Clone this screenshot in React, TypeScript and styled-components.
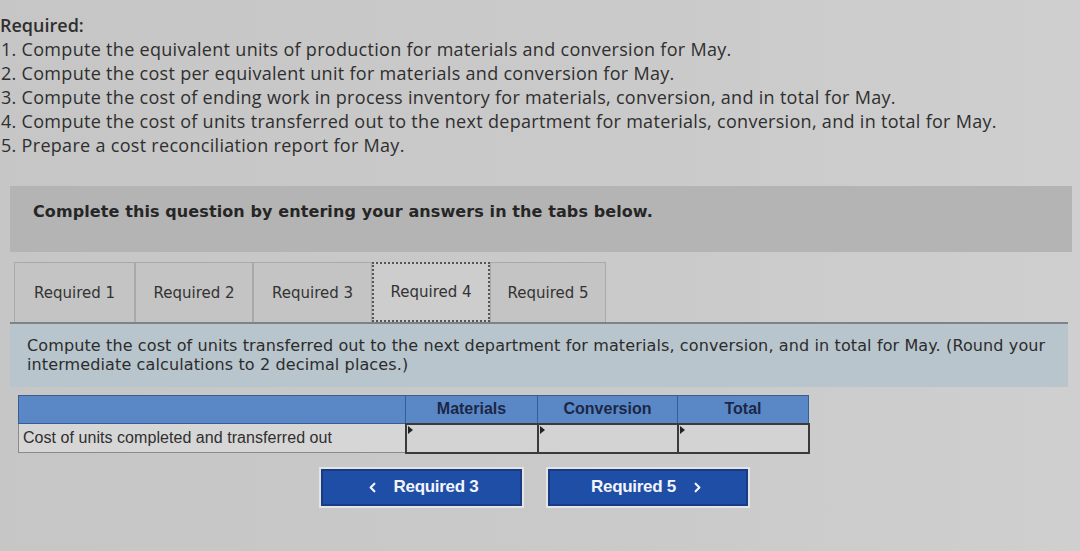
import React from 'react';
import styled, { createGlobalStyle } from 'styled-components';
import { ChevronLeft, ChevronRight } from 'lucide-react';

const Global = createGlobalStyle`
  body {
    margin: 0;
    background-color: #c9c9c9;
    font-family: "Open Sans", sans-serif;
  }
`;

const Page = styled.div`
  width: 1080px;
  height: 551px;
  overflow: hidden;
  background: linear-gradient(90deg, #c6c6c6 0%, #cacaca 60%, #cfcfcf 100%);
`;

const Instructions = styled.div`
  padding: 13px 0 0 0;
  font-family: "Open Sans", sans-serif;
  font-size: 18px;
  letter-spacing: 0.3px;
  line-height: 24px;
  color: #2f2f2f;
`;

const Heading = styled.div`
  font-weight: 600;
  letter-spacing: 0;
`;

const Line = styled.div`
  padding-left: 1px;
`;

const Banner = styled.div`
  margin: 29px 8px 0 10px;
  height: 66px;
  box-sizing: border-box;
  background-color: #b4b4b4;
  padding: 16px 0 0 23px;
  font-family: "DejaVu Sans", Verdana, sans-serif;
  font-weight: bold;
  font-size: 16px;
  letter-spacing: 0.1px;
  color: #262626;
`;

const Tabs = styled.div`
  display: flex;
  margin: 10px 0 0 14px;
`;

const Tab = styled.div<{ $w: number; $active?: boolean }>`
  width: ${(p) => p.$w}px;
  height: 60px;
  box-sizing: border-box;
  display: flex;
  align-items: center;
  justify-content: center;
  font-family: "DejaVu Sans", Verdana, sans-serif;
  font-size: 15px;
  color: #333;
  background-color: ${(p) => (p.$active ? '#cdcdcd' : '#c4c4c4')};
  border: ${(p) => (p.$active ? '2px dotted #555' : '1px solid #a9a9a9')};
  border-bottom: ${(p) => (p.$active ? '2px dotted #555' : 'none')};
  margin-bottom: ${(p) => (p.$active ? '-1px' : '0')};
`;

const Panel = styled.div`
  margin: 0 12px 0 10px;
  border-top: 2px solid #7d8388;
  background-color: #b8c5cd;
  height: 65px;
  padding: 12px 0 0 17px;
  box-sizing: border-box;
  font-family: "DejaVu Sans", Verdana, sans-serif;
  font-size: 16px;
  letter-spacing: 0.12px;
  line-height: 19px;
  color: #2c2c2c;
  white-space: nowrap;
`;

const Table = styled.table`
  margin: 8px 0 0 18px;
  border-collapse: collapse;
  font-family: "Liberation Sans", Arial, sans-serif;
`;

const Head = styled.th<{ $w: number }>`
  width: ${(p) => p.$w}px;
  height: 28px;
  padding: 0;
  background-color: #5a88c6;
  border: 1px solid #3b5c92;
  font-size: 16px;
  font-weight: bold;
  color: #1c2747;
  vertical-align: top;
  padding-top: 4px;
  box-sizing: border-box;
`;

const Label = styled.td`
  height: 28px;
  padding: 0 0 0 4px;
  background-color: #d6d6d6;
  border: 1px solid #8a8a8a;
  font-size: 16px;
  letter-spacing: 0.05px;
  color: #2f2f2f;
`;

const Input = styled.td`
  position: relative;
  padding: 0;
  background-color: #d3d3d3;
  border: 2px solid #3a3a3a;

  &::before {
    content: '';
    position: absolute;
    top: 1px;
    left: 1px;
    border-top: 4px solid transparent;
    border-bottom: 4px solid transparent;
    border-left: 5px solid #222;
  }
`;

const Buttons = styled.div`
  display: flex;
  gap: 26px;
  margin: 15px 0 0 321px;
`;

const NavButton = styled.div<{ $w: number }>`
  width: ${(p) => p.$w}px;
  height: 37px;
  box-sizing: border-box;
  background-color: #1e4ea6;
  border: 2px solid #173c85;
  box-shadow: 0 0 0 2px #e4e4e4;
  display: flex;
  align-items: center;
  justify-content: center;
  gap: 14px;
  font-family: "Liberation Sans", Arial, sans-serif;
  font-weight: bold;
  font-size: 17px;
  letter-spacing: -0.3px;
  color: #f2f4fa;
`;

const tabs = [
  { label: 'Required 1', w: 121 },
  { label: 'Required 2', w: 118 },
  { label: 'Required 3', w: 119 },
  { label: 'Required 4', w: 118, active: true },
  { label: 'Required 5', w: 116 },
];

const App = () => (
  <Page>
    <Global />
    <Instructions>
      <Heading>Required:</Heading>
      <Line>1. Compute the equivalent units of production for materials and conversion for May.</Line>
      <Line>2. Compute the cost per equivalent unit for materials and conversion for May.</Line>
      <Line>3. Compute the cost of ending work in process inventory for materials, conversion, and in total for May.</Line>
      <Line>4. Compute the cost of units transferred out to the next department for materials, conversion, and in total for May.</Line>
      <Line>5. Prepare a cost reconciliation report for May.</Line>
    </Instructions>
    <Banner>Complete this question by entering your answers in the tabs below.</Banner>
    <Tabs>
      {tabs.map((t) => (
        <Tab key={t.label} $w={t.w} $active={t.active}>
          {t.label}
        </Tab>
      ))}
    </Tabs>
    <Panel>
      Compute the cost of units transferred out to the next department for materials, conversion, and in total for May. (Round your
      <br />
      intermediate calculations to 2 decimal places.)
    </Panel>
    <Table>
      <thead>
        <tr>
          <Head $w={387}></Head>
          <Head $w={132}>Materials</Head>
          <Head $w={140}>Conversion</Head>
          <Head $w={131}>Total</Head>
        </tr>
      </thead>
      <tbody>
        <tr>
          <Label>Cost of units completed and transferred out</Label>
          <Input />
          <Input />
          <Input />
        </tr>
      </tbody>
    </Table>
    <Buttons>
      <NavButton $w={201}>
        <ChevronLeft size={15} strokeWidth={3.5} />
        Required 3
      </NavButton>
      <NavButton $w={200}>
        Required 5
        <ChevronRight size={15} strokeWidth={3.5} />
      </NavButton>
    </Buttons>
  </Page>
);

export default App;
